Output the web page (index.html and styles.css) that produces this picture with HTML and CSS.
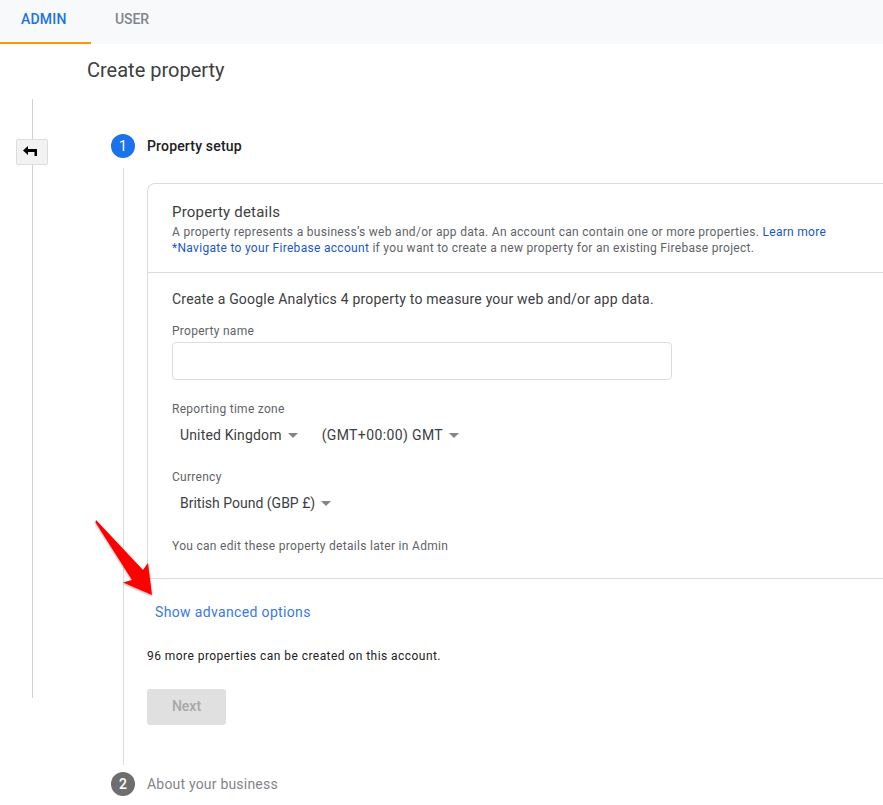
FILE: index.html
```html
<!DOCTYPE html>
<html lang="en">
<head>
<meta charset="utf-8">
<title>Create property</title>
<link rel="stylesheet" href="styles.css">
</head>
<body>
<nav class="tabs">
  <a class="tab tab-active">ADMIN</a>
  <a class="tab tab-user">USER</a>
</nav>
<div class="page">
  <aside class="rail">
    <div class="rail-line rail-top"></div>
    <button class="back" aria-label="Back">
      <svg width="14" height="10" viewBox="0 0 14 10"><path d="M0 4.5 5 0V3H14V10H11.5V6H5V9Z" fill="#000"/></svg>
    </button>
    <div class="rail-line rail-bottom"></div>
  </aside>
  <main class="content">
    <h1 class="title">Create property</h1>
    <div class="step-head">
      <span class="num num-active">1</span>
      <span class="step-title">Property setup</span>
    </div>
    <div class="step-body">
      <div class="connector"></div>
      <div class="step-main">
        <section class="card">
          <header class="card-head">
            <h2 class="card-title">Property details</h2>
            <p class="card-desc">A property represents a business’s web and/or app data. An account can contain one or more properties. <a class="link">Learn more</a></p>
            <p class="card-desc"><a class="link">*Navigate to your Firebase account</a> if you want to create a new property for an existing Firebase project.</p>
          </header>
          <div class="card-body">
            <p class="lead">Create a Google Analytics 4 property to measure your web and/or app data.</p>
            <label class="label label-name">Property name</label>
            <div class="input"></div>
            <label class="label label-zone">Reporting time zone</label>
            <div class="selects">
              <span class="select select-zone">United Kingdom<i class="caret"></i></span>
              <span class="select select-gmt">(GMT+00:00) GMT<i class="caret"></i></span>
            </div>
            <label class="label label-currency">Currency</label>
            <div class="selects">
              <span class="select">British Pound (GBP £)<i class="caret"></i></span>
            </div>
            <p class="note">You can edit these property details later in Admin</p>
          </div>
          <div class="card-foot"></div>
        </section>
        <a class="advanced">Show advanced options</a>
        <p class="quota">96 more properties can be created on this account.</p>
        <button class="next" disabled>Next</button>
      </div>
    </div>
    <div class="step-head step-two">
      <span class="num num-idle">2</span>
      <span class="step-title step-title-idle">About your business</span>
    </div>
  </main>
</div>
<svg class="arrow" width="70" height="90" viewBox="0 0 70 90">
  <defs><filter id="s" x="-20%" y="-20%" width="150%" height="150%"><feDropShadow dx="0" dy="1" stdDeviation="1" flood-color="#000" flood-opacity=".4"/></filter></defs>
  <path d="M6 5 53 55 58 48 62 80 33 67.5 42 65 5.5 7.5Z" fill="#f00" filter="url(#s)"/>
</svg>
</body>
</html>
```
FILE: styles.css
```css
* { box-sizing: border-box; }
html, body { margin: 0; height: 805px; overflow: hidden; background: #fff; }
body { font-family: Roboto, "Liberation Sans", sans-serif; color: #212124; position: relative; }
p, h1, h2 { margin: 0; font-weight: 400; }

.tabs { display: flex; height: 44px; background: #f8f9fa; }
.tab { font-size: 14px; font-weight: 500; line-height: 39px; height: 44px; }
.tab-active { width: 91px; padding-left: 21px; color: #1a73e8; border-bottom: 2px solid #ff9800; letter-spacing: .2px; }
.tab-user { margin-left: 24px; color: #80868b; letter-spacing: -.1px; }

.page { display: flex; align-items: flex-start; }
.rail { width: 32px; margin-left: 16px; padding-top: 55px; display: flex; flex-direction: column; align-items: center; flex: none; }
.rail-line { width: 1px; background: #cfd0d2; }
.rail-top { height: 40px; }
.rail-bottom { height: 533px; }
.back { width: 32px; height: 26px; padding: 0 4px 3px 0; display: flex; align-items: center; justify-content: center; background: #f2f2f2; border: 1px solid #dadce0; border-radius: 2px; }

.content { margin-left: 39px; flex: none; width: 796px; }
.title { font-size: 20px; line-height: 28px; color: #3c4043; margin-top: 12px; }

.step-head { display: flex; align-items: center; margin-left: 24px; margin-top: 50px; height: 24px; }
.num { width: 24px; height: 24px; border-radius: 50%; color: #fff; font-size: 14px; font-weight: 500; display: flex; align-items: center; justify-content: center; flex: none; }
.num-active { background: #1a73e8; font-weight: 400; }
.num-idle { background: #6e6e6e; }
.step-title { margin-left: 12px; font-size: 14px; font-weight: 500; color: #202124; letter-spacing: .17px; }
.step-title-idle { color: #80868b; font-weight: 400; letter-spacing: .2px; line-height: 26px; }

.step-body { display: flex; margin-left: 36px; margin-top: 10px; height: 597px; }
.connector { width: 1px; background: #dadce0; flex: none; }
.step-main { margin-left: 23px; padding-top: 15px; flex: none; width: 760px; }

.step-two { margin-top: 7px; }

.card { border: 1px solid #dadce0; border-right: 0; border-bottom: 0; border-radius: 8px 0 0 0; width: 760px; height: 396px; display: flex; flex-direction: column; }
.card-head { padding: 18px 24px 0; height: 89px; border-bottom: 1px solid #dadce0; }
.card-title { font-size: 15px; line-height: 20px; color: #3c4043; letter-spacing: .2px; margin-bottom: 2px; }
.card-desc { font-size: 12px; line-height: 16px; color: #5f6368; letter-spacing: .3px; }
.link { color: #1a57c8; }
.card-body { padding: 17px 24px 0; flex: 1; }
.lead { font-size: 14px; line-height: 18px; color: #3c4043; letter-spacing: .2px; }
.label { display: block; font-size: 12px; line-height: 16px; color: #5f6368; letter-spacing: .28px; }
.label-name { margin-top: 15px; }
.input { width: 500px; height: 38px; margin-top: 3px; border: 1px solid #dadce0; border-radius: 4px; }
.label-zone { margin-top: 21px; }
.label-currency { margin-top: 25px; }
.selects { display: flex; margin-top: 9px; padding-left: 8px; }
.select { display: inline-flex; align-items: center; font-size: 14px; line-height: 18px; color: #3c4043; }
.select-zone { letter-spacing: .15px; margin-right: 22px; }
.select-gmt { letter-spacing: .38px; margin-left: 2px; }
.caret { width: 0; height: 0; margin-left: 6px; margin-top: 1px; border-style: solid; border-color: #80868b transparent transparent; border-width: 5px 5.5px 0; }
.note { font-size: 12px; line-height: 16px; color: #5f6368; margin-top: 26px; letter-spacing: .3px; }
.card-foot { border-top: 1px solid #dadce0; height: 0; }

.advanced { display: block; margin-top: 24px; margin-left: 8px; font-size: 14px; line-height: 18px; color: #3b78e7; letter-spacing: .35px; }
.quota { margin-top: 27px; font-size: 12px; line-height: 16px; color: #212124; letter-spacing: .45px; }
.next { display: block; width: 79px; height: 36px; margin-top: 25px; padding: 0 0 2px; border: 0; border-radius: 3px; background: #e0e0e0; color: #a8a8a8; font: 500 14px Roboto, sans-serif; }

.arrow { position: absolute; left: 90px; top: 515px; }
```
